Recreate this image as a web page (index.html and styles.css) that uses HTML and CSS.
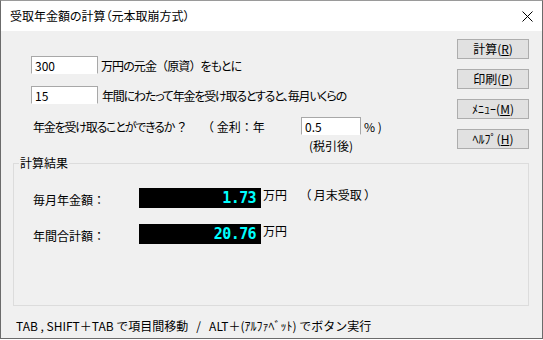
FILE: index.html
```html
<!DOCTYPE html>
<html lang="ja">
<head>
    <meta charset="UTF-8">
    <title>受取年金額の計算（元本取崩方式）</title>
    <link rel="stylesheet" href="styles.css">
</head>
<body>
    <div class="window">
        <div class="titlebar">
            <span class="title">受取年金額の計算（元本取崩方式）</span>
            <svg class="close" width="11" height="11" viewBox="0 0 11 11">
                <path d="M0.5 0.5 L10.5 10.5 M10.5 0.5 L0.5 10.5" stroke="#000" stroke-width="1" fill="none"/>
            </svg>
        </div>
        <div class="client">
            <div class="top">
                <div class="form">
                    <div class="row">
                        <input type="text" class="edit" value="300">
                        <span class="after snug">万円の元金<span class="wide">（</span>原資<span class="wide">）</span>をもとに</span>
                    </div>
                    <div class="row">
                        <input type="text" class="edit" value="15">
                        <span class="after tight">年間にわたって年金を受け取るとすると、毎月いくらの</span>
                    </div>
                    <div class="row rate">
                        <span class="question tight">年金を受け取ることができるか <span class="wide">？</span></span>
                        <span class="kinri wide">（ 金利：年</span>
                        <input type="text" class="edit small" value="0.5">
                        <span class="percent">% )</span>
                    </div>
                    <div class="note">(税引後)</div>
                </div>
                <div class="buttons">
                    <button type="button">計算(<u>R</u>)</button>
                    <button type="button">印刷(<u>P</u>)</button>
                    <button type="button">ﾒﾆｭｰ(<u>M</u>)</button>
                    <button type="button">ﾍﾙﾌﾟ(<u>H</u>)</button>
                </div>
            </div>
            <fieldset class="result">
                <legend>計算結果</legend>
                <div class="result-rows">
                    <div class="result-row">
                        <span class="label">毎月年金額：</span>
                        <span class="display">1.73</span>
                        <span class="unit">万円</span>
                        <span class="memo">（ 月末受取 ）</span>
                    </div>
                    <div class="result-row">
                        <span class="label">年間合計額：</span>
                        <span class="display">20.76</span>
                        <span class="unit">万円</span>
                    </div>
                </div>
            </fieldset>
            <div class="hint">TAB , SHIFT＋TAB で項目間移動 &nbsp;&nbsp;/ &nbsp;&nbsp;ALT＋(ｱﾙﾌｧﾍﾞｯﾄ) でボタン実行</div>
        </div>
    </div>
</body>
</html>
```

FILE: styles.css
```css
body {
    margin: 0;
    background-color: #fff;
    font-family: "Noto Sans CJK JP", sans-serif;
    font-size: 12px;
    color: #000;
    font-feature-settings: "palt";
}
.window {
    width: 543px;
    height: 339px;
    box-sizing: border-box;
    border: 1px solid #6b6b6b;
    border-top-color: #9a9a9a;
    background-color: #f0f0f0;
    display: flex;
    flex-direction: column;
}
.titlebar {
    height: 30px;
    background-color: #fff;
    display: flex;
    align-items: center;
    justify-content: space-between;
    padding: 0 9px 0 9px;
    line-height: 30px;
}
.close {
    display: block;
}
.client {
    flex: 1;
}
.wide {
    font-feature-settings: normal;
}
.tight {
    letter-spacing: -1.2px;
}
.snug {
    letter-spacing: -0.9px;
}
.top {
    display: flex;
    justify-content: space-between;
    height: 124px;
}
.form {
    padding-left: 30px;
    padding-top: 25px;
}
.row {
    display: flex;
    align-items: center;
    height: 18px;
    margin-bottom: 12px;
    white-space: nowrap;
}
.row:nth-child(2) {
    margin-bottom: 13px;
}
.edit {
    width: 67px;
    height: 18px;
    box-sizing: border-box;
    border: 1px solid #a8a8a8;
    border-bottom-color: #fff;
    background-color: #fff;
    padding: 0 3px;
    margin: 0;
    font-family: inherit;
    font-size: 12px;
    outline: none;
}
.edit.small {
    width: 60px;
}
.after {
    margin-left: 3px;
}
.after.tight {
    margin-left: 4px;
}
.question {
    margin-left: 2px;
    width: 169px;
}
.kinri {
    width: 99px;
}
.percent {
    margin-left: 3px;
}
.note {
    margin-left: 278px;
    margin-top: -9px;
    line-height: 16px;
}
.buttons {
    display: flex;
    flex-direction: column;
    gap: 10px;
    margin-top: 8px;
    margin-right: 13px;
}
.buttons button {
    width: 72px;
    height: 20px;
    padding: 0;
    border: 1px solid #adadad;
    background-color: #e1e1e1;
    font-family: inherit;
    font-size: 12px;
    color: #000;
    line-height: 18px;
}
.result {
    margin: 0 0 0 12px;
    width: 516px;
    height: 151px;
    box-sizing: border-box;
    border: 1px solid #dcdcdc;
    padding: 0 0 0 5px;
}
.result legend {
    padding: 0 1px;
    line-height: 16px;
}
.result-rows {
    padding-top: 17px;
    padding-left: 14px;
    display: flex;
    flex-direction: column;
    gap: 16px;
}
.result-row {
    display: flex;
    align-items: flex-start;
    height: 20px;
    white-space: nowrap;
}
.label {
    width: 106px;
    line-height: 20px;
    padding-top: 2px;
    font-feature-settings: normal;
}
.display {
    width: 122px;
    height: 20px;
    box-sizing: border-box;
    background-color: #000;
    color: #00ffff;
    font-family: "DejaVu Sans Mono", monospace;
    font-weight: bold;
    font-size: 15px;
    letter-spacing: -0.6px;
    line-height: 20px;
    text-align: right;
    padding-right: 5px;
}
.unit {
    margin-left: 2px;
    line-height: 14px;
}
.memo {
    margin-left: 18px;
    line-height: 14px;
}
.hint {
    margin-top: 12px;
    padding-left: 15px;
    line-height: 16px;
    font-feature-settings: normal;
}
```
